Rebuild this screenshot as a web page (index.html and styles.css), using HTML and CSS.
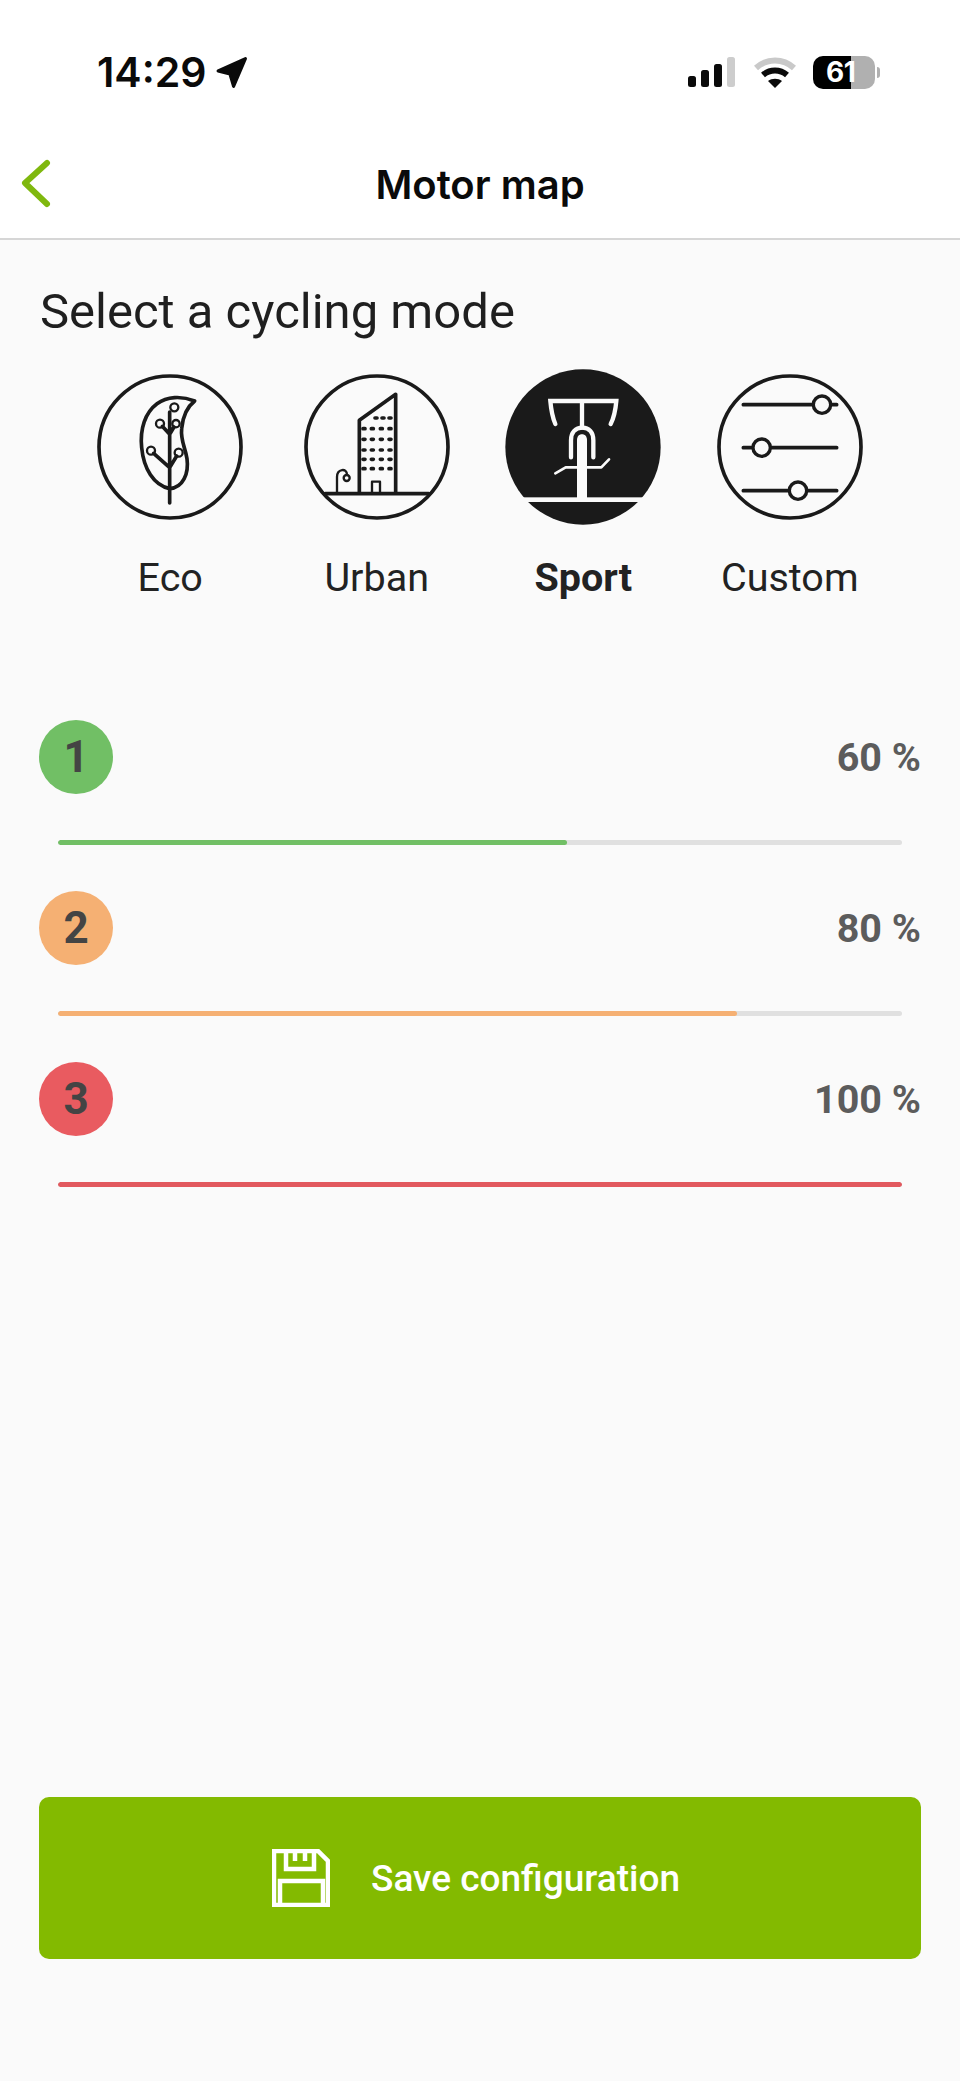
FILE: index.html
```html
<!DOCTYPE html>
<html lang="en">
<head>
<meta charset="utf-8">
<title>Motor map</title>
<link rel="stylesheet" href="styles.css">
</head>
<body>
<div class="app">
  <div class="statusbar">
    <div class="time-wrap">
      <span class="time">14:29</span>
      <svg class="loc" viewBox="0 0 32 32"><path d="M3 14.500 29.500 2.500 18 29.500 14.500 17.500Z"/></svg>
    </div>
    <div class="status-right">
      <div class="signal"><i class="b1"></i><i class="b2"></i><i class="b3"></i><i class="b4"></i></div>
      <svg class="wifi" viewBox="0 0 42 31">
        <path class="wifi-off" d="M2 11C13 1 29 1 40 11" />
        <path class="wifi-on" d="M9 18C16 12 26 12 33 18" />
        <path class="wifi-dot" d="M14 24C18 21 24 21 28 24L21 31Z" />
      </svg>
      <div class="battery"><span>61</span></div>
      <div class="nub"></div>
    </div>
  </div>
  <header class="navbar">
    <svg class="back" viewBox="0 0 32 52"><path d="M26 5 4 25 26 46"/></svg>
    <h1 class="nav-title">Motor map</h1>
  </header>
  <main class="content">
    <h2 class="section-title">Select a cycling mode</h2>
    <div class="modes">
      <div class="mode">
        <svg class="mode-icon" viewBox="37 26 468 468">
          <circle class="ln" cx="271" cy="260" r="213"/>
          <path class="ln" d="M345 122C305 106 262 108 232 130C197 156 180 205 186 262C192 325 222 375 270 385C310 382 328 340 322 295C317 262 302 240 306 205C309 170 322 140 345 122Z"/>
          <path class="ln" d="M270 428V155M270 222 248 198M270 222 283 200M270 322 222 279M270 322 291 287"/>
          <circle class="ln thin" cx="284" cy="141" r="12"/>
          <circle class="ln thin" cx="241" cy="190" r="12"/>
          <circle class="ln thin" cx="289" cy="190" r="11"/>
          <circle class="ln thin" cx="214" cy="271" r="12"/>
          <circle class="ln thin" cx="297" cy="277" r="12"/>
        </svg>
        <span class="mode-label">Eco</span>
      </div>
      <div class="mode">
        <svg class="mode-icon" viewBox="26 26 468 468">
          <circle class="ln" cx="260" cy="260" r="213"/>
          <path class="ln" d="M105 400H415M207 400V180L316 102V400"/>
          <path class="ln thin" d="M245 400V364H269V400M140 400V350C140 325 170 322 170 343"/>
          <circle class="ln thin" cx="169" cy="353" r="9"/>
          <path class="dots" d="M254 173H260M275 173H281M296 173H302M218 205H224M243 205H249M270 205H276M296 205H302M218 237H224M243 237H249M270 237H276M296 237H302M218 269H224M243 269H249M270 269H276M296 269H302M218 297H224M243 297H249M270 297H276M296 297H302M218 325H224M243 325H249M270 325H276M296 325H302"/>
        </svg>
        <span class="mode-label">Urban</span>
      </div>
      <div class="mode">
        <svg class="mode-icon" viewBox="46 26 468 468">
          <circle class="solid" cx="280" cy="260" r="233"/>
          <path class="wt" d="M197 191C188 170 184 145 182 122H380C378 145 374 170 363 191M277 122V202"/>
          <path class="wt" d="M244 291V240C244 216 258 202 278 202C298 202 311 216 311 240V291"/>
          <path class="wt-thin" d="M197 339 228 321H263M293 321H335L358 297"/>
          <path class="wt-fill" d="M262 418V240C262 228 268 222 277 222C286 222 292 228 292 240V418Z"/>
          <rect class="wt-fill" x="95" y="411" width="370" height="14"/>
        </svg>
        <span class="mode-label active">Sport</span>
      </div>
      <div class="mode">
        <svg class="mode-icon" viewBox="36 26 468 468">
          <circle class="ln" cx="270" cy="260" r="213"/>
          <path class="ln" d="M130 133H410M130 262H410M130 391H410"/>
          <circle class="knob" cx="366" cy="133" r="26"/>
          <circle class="knob" cx="185" cy="262" r="26"/>
          <circle class="knob" cx="294" cy="391" r="26"/>
        </svg>
        <span class="mode-label">Custom</span>
      </div>
    </div>
    <div class="levels">
      <div class="level level-1">
        <div class="level-head"><span class="badge">1</span><span class="pct">60 %</span></div>
        <div class="track"><div class="fill" style="width:60.3%"></div></div>
      </div>
      <div class="level level-2">
        <div class="level-head"><span class="badge">2</span><span class="pct">80 %</span></div>
        <div class="track"><div class="fill" style="width:80.5%"></div></div>
      </div>
      <div class="level level-3">
        <div class="level-head"><span class="badge">3</span><span class="pct">100 %</span></div>
        <div class="track"><div class="fill" style="width:100%"></div></div>
      </div>
    </div>
    <button class="save" type="button">
      <svg class="save-icon" viewBox="0 0 58 58">
        <path d="M2 2H46L56 12V56H2Z"/>
        <path d="M14 2V20H42V2M8 56V32H51V56M23 2V12M33 2V12"/>
      </svg>
      <span>Save configuration</span>
    </button>
  </main>
</div>
</body>
</html>
```
FILE: styles.css
```css
* { box-sizing: border-box; }
html, body { margin: 0; padding: 0; }
body { background: #fff; font-family: Roboto, "Liberation Sans", sans-serif; color: #1a1a1a; }
.app { width: 960px; height: 2081px; display: flex; flex-direction: column; overflow: hidden; }

.statusbar { height: 130px; padding: 14px 80px 0 97px; display: flex; align-items: center; justify-content: space-between; background: #fff; }
.time-wrap { display: flex; align-items: center; gap: 8px; }
.time { font: 600 41px/1 Inter, sans-serif; color: #0a0a0a; }
.loc { width: 33px; height: 33px; fill: #0a0a0a; stroke: #0a0a0a; stroke-width: 3; stroke-linejoin: round; }
.status-right { display: flex; align-items: center; }
.signal { display: flex; align-items: flex-end; gap: 5px; height: 30px; margin-right: 19px; }
.signal i { display: block; width: 8px; background: #0a0a0a; border-radius: 2.500px; }
.signal .b1 { height: 11px; }
.signal .b2 { height: 17px; }
.signal .b3 { height: 23px; }
.signal .b4 { height: 30px; background: #cdcdcd; }
.wifi { width: 42px; height: 31px; margin-right: 17px; fill: none; }
.wifi-off { stroke: #c9c9c9; stroke-width: 6; }
.wifi-on { stroke: #0a0a0a; stroke-width: 6; }
.wifi-dot { fill: #0a0a0a; }
.battery { width: 62px; height: 33px; border-radius: 10px; background: linear-gradient(90deg, #000 38px, #b0b0b0 38px); position: relative; }
.battery span { position: absolute; left: 13px; top: 0; font: 700 28px/33px Inter, sans-serif; color: #fff; letter-spacing: -0.5px; }
.nub { width: 3px; height: 11px; margin-left: 2px; background: #b0b0b0; border-radius: 0 3px 3px 0; }

.navbar { height: 110px; display: grid; grid-template-columns: 80px 1fr 80px; align-items: center; background: #fff; border-bottom: 2px solid #d6d6d6; }
.back { width: 32px; height: 52px; margin-left: 21px; fill: none; stroke: #7fb80e; stroke-width: 6; stroke-linecap: round; stroke-linejoin: round; }
.nav-title { margin: 0; padding-top: 2px; text-align: center; font: 600 40px/1 Inter, sans-serif; color: #0a0a0a; }

.content { flex: 1; background: #fafafa; padding: 47px 39px 122px; display: flex; flex-direction: column; }
.section-title { margin: 0 0 0 1px; font-weight: 400; font-size: 49px; line-height: 50px; color: #1f1f1f; }
.modes { display: grid; grid-template-columns: repeat(4, 1fr); margin: 32px 28px 0; }
.mode { display: flex; flex-direction: column; align-items: center; }
.mode-icon { width: 156px; height: 156px; display: block; }
.mode-label { margin-top: 31px; font-size: 39.500px; line-height: 44px; color: #222; }
.mode-label.active { font-weight: 700; }
.ln { fill: none; stroke: #1a1a1a; stroke-width: 11; stroke-linecap: round; stroke-linejoin: round; }
.ln.thin { stroke-width: 7; }
.dots { fill: none; stroke: #1a1a1a; stroke-width: 11; stroke-linecap: round; }
.solid { fill: #1a1a1a; }
.wt { fill: none; stroke: #fafafa; stroke-width: 13; stroke-linecap: round; stroke-linejoin: miter; }
.wt-thin { fill: none; stroke: #fafafa; stroke-width: 8; stroke-linecap: round; stroke-linejoin: round; }
.wt-fill { fill: #fafafa; }
.knob { fill: #fafafa; stroke: #1a1a1a; stroke-width: 10; }

.levels { margin-top: 120px; display: flex; flex-direction: column; gap: 46px; }
.level-head { display: flex; align-items: center; justify-content: space-between; height: 73px; }
.badge { width: 74px; height: 74px; border-radius: 50%; display: flex; align-items: center; justify-content: center; font-size: 44px; font-weight: 700; color: #444; }
.pct { padding-top: 2px; font-size: 39.500px; font-weight: 700; color: #5c5c5c; }
.track { height: 5px; margin: 47px 19px 0; background: #e0e0e0; border-radius: 3px; overflow: hidden; }
.fill { height: 100%; border-radius: 3px; }
.level-1 .badge { background: #71bf65; }
.level-1 .fill { background: #71bf65; }
.level-2 .badge { background: #f5b073; }
.level-2 .fill { background: #f5b073; }
.level-3 .badge { background: #e95b60; }
.level-3 .fill { background: #e2595e; }

.save { margin-top: auto; height: 162px; width: 100%; border: 0; border-radius: 10px; background: #83ba00; color: #fff; display: flex; align-items: center; justify-content: center; gap: 41px; padding: 0 10px 0 2px; font-family: Roboto, sans-serif; font-size: 37px; font-weight: 500; }
.save-icon { width: 58px; height: 58px; fill: none; stroke: #fff; stroke-width: 4.500; }
```
